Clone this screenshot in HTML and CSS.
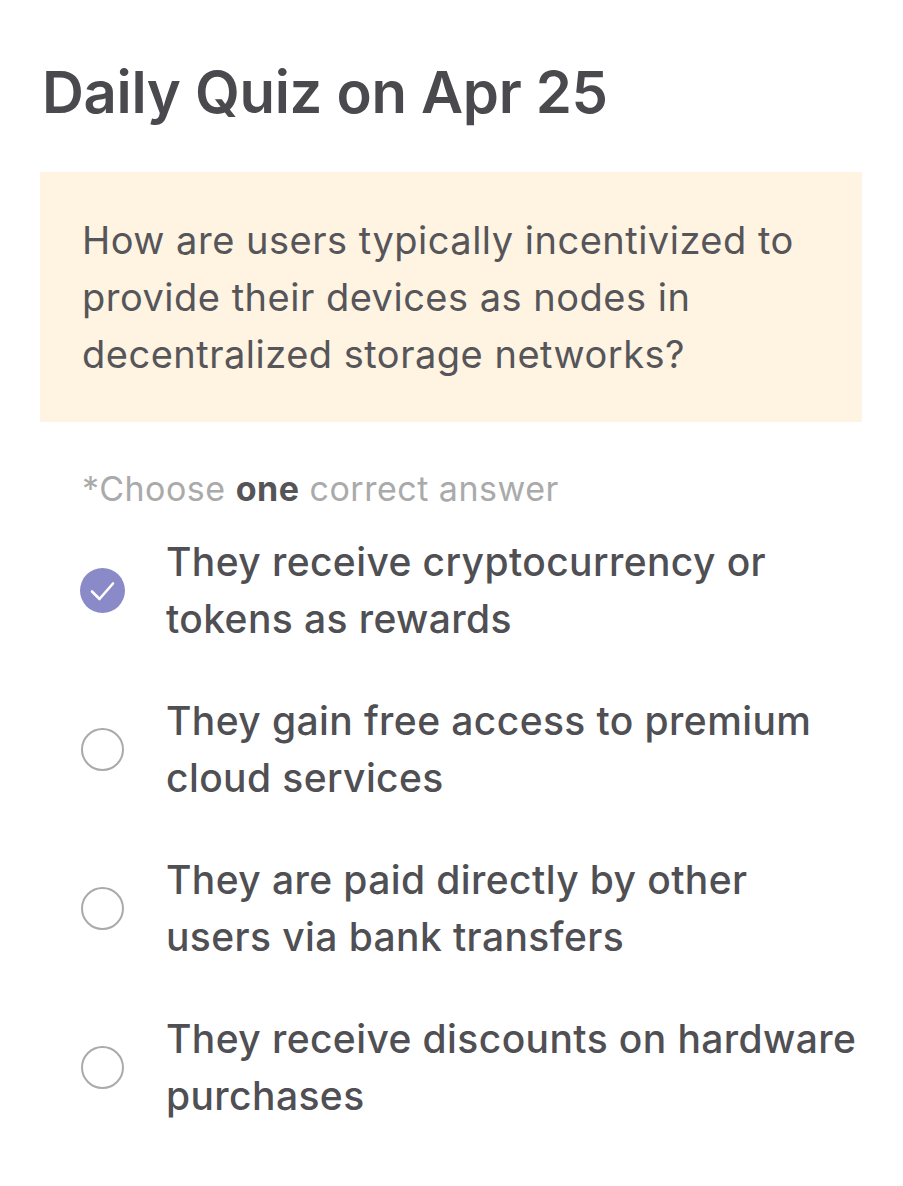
FILE: index.html
```html
<!DOCTYPE html>
<html lang="en">
<head>
<meta charset="utf-8">
<title>Daily Quiz</title>
<link rel="stylesheet" href="styles.css">
</head>
<body>
<main class="quiz">
  <h1 class="title">Daily Quiz on Apr 25</h1>
  <section class="question">
    <p>How are users typically incentivized to provide their devices as nodes in decentralized storage networks?</p>
  </section>
  <p class="hint">*Choose <strong>one</strong> correct answer</p>
  <ul class="options">
    <li class="option selected">
      <span class="radio">
        <svg viewBox="0 0 45 45" width="45" height="45"><path d="M12 23.5l7.5 7.5L33 15.5" fill="none" stroke="#fff" stroke-width="2.6" stroke-linecap="round" stroke-linejoin="round"/></svg>
      </span>
      <span class="label">They receive cryptocurrency or tokens as rewards</span>
    </li>
    <li class="option">
      <span class="radio"></span>
      <span class="label">They gain free access to premium cloud services</span>
    </li>
    <li class="option">
      <span class="radio"></span>
      <span class="label">They are paid directly by other users via bank transfers</span>
    </li>
    <li class="option">
      <span class="radio"></span>
      <span class="label">They receive discounts on hardware purchases</span>
    </li>
  </ul>
</main>
</body>
</html>
```
FILE: styles.css
```css
html, body {
  margin: 0;
  padding: 0;
  background: #ffffff;
}
body {
  font-family: Inter, "Noto Sans", sans-serif;
  color: #4f4f54;
}
.quiz {
  padding: 56px 41px 40px 40px;
}
.title {
  margin: 0 0 0 2px;
  font-size: 58px;
  line-height: 72px;
  font-weight: 600;
  color: #4a4a4e;
  letter-spacing: -0.3px;
}
.question {
  margin-top: 44px;
  background: #fff3e1;
  padding: 40px 42px 39px 42px;
}
.question p {
  margin: 0;
  font-size: 38px;
  line-height: 57px;
  font-weight: 400;
  letter-spacing: 0.5px;
  color: #55555a;
}
.hint {
  margin: 43px 0 0 42px;
  font-size: 34px;
  line-height: 48px;
  color: #aaaaaa;
  letter-spacing: 0.5px;
}
.hint strong {
  color: #555558;
  font-weight: 700;
}
.options {
  list-style: none;
  margin: 20px 0 0 0;
  padding: 0 2px 0 0;
  display: flex;
  flex-direction: column;
  gap: 45px;
}
.option {
  display: flex;
  align-items: center;
}
.radio {
  flex: none;
  width: 43px;
  height: 43px;
  margin-left: 41px;
  margin-right: 42px;
  box-sizing: border-box;
  border: 2.5px solid #aaaaaa;
  border-radius: 50%;
  display: flex;
  align-items: center;
  justify-content: center;
}
.selected .radio {
  border: none;
  background: #8b8ac8;
  width: 45px;
  height: 45px;
  margin-left: 40px;
  margin-right: 41px;
}
.label {
  font-size: 39px;
  line-height: 57px;
  font-weight: 500;
  letter-spacing: 0.4px;
  color: #4f4f54;
}
```
